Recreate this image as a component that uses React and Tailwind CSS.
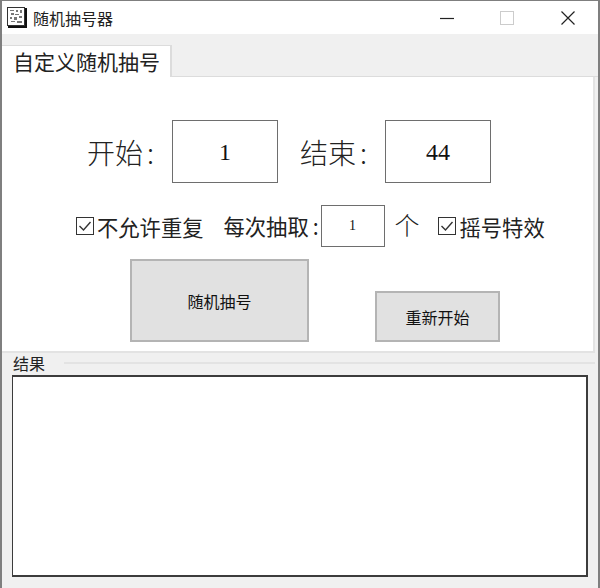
const cjk = "font-['Noto_Sans_CJK_SC',sans-serif]";

const AppIcon = () => (
	<svg width="20" height="21" viewBox="0 0 20 21" className="shrink-0">
		<rect x="0.5" y="0.5" width="17" height="18" fill="#fff" stroke="#333" />
		<path d="M18 1h2v20H1v-2h17z" fill="#111" />
		<path d="M3 3h4v1H3zM9 3h2v2H9zM13 3h2v3h-2zM4 6h3v2H4zM8 7h4v1H8zM3 10h2v2H3zM7 10h3v3H7zM12 9h3v2h-3zM4 14h4v1H4zM10 14h5v2h-5z" fill="#777" />
	</svg>
);

const CheckBox = () => (
	<svg width="18" height="18" viewBox="0 0 18 18" className="shrink-0">
		<rect x="0.5" y="0.5" width="17" height="17" fill="#fff" stroke="#333" />
		<path d="M3.5 9l4 4 7-8" fill="none" stroke="#333" strokeWidth="1.4" />
	</svg>
);

const NumberBox = ({ value, className }) => (
	<div className={`flex items-center justify-center bg-white border border-[#6e6e6e] text-[#111] font-['Liberation_Serif',serif] ${className}`}>
		{value}
	</div>
);

const Button = ({ label, className }) => (
	<button className={`bg-[#e1e1e1] border-2 border-[#b4b4b4] text-[16px] text-[#111] ${className}`}>
		{label}
	</button>
);

export default function App() {
	return (
		<div className={`w-[600px] h-[588px] flex flex-col bg-[#f0f0f0] border-x-2 border-t border-[#7f7f7f] text-[#1a1a1a] ${cjk}`}>
			{/* title bar */}
			<div className="h-[33px] bg-white flex items-center shrink-0">
				<div className="ml-[5px] flex items-center gap-[6px]">
					<AppIcon />
					<span className="text-[16px] leading-none text-[#222]">随机抽号器</span>
				</div>
				<div className="ml-auto flex items-center">
					<svg width="14" height="14" viewBox="0 0 14 14" className="mr-[46px]">
						<path d="M0 7.5h14" stroke="#222" strokeWidth="1.2" />
					</svg>
					<svg width="14" height="14" viewBox="0 0 14 14" className="mr-[47px]">
						<rect x="0.5" y="0.5" width="13" height="13" fill="none" stroke="#ccc" strokeWidth="1" />
					</svg>
					<svg width="14" height="14" viewBox="0 0 14 14" className="mr-[23px]">
						<path d="M0.5 0.5l13 13M13.5 0.5l-13 13" stroke="#222" strokeWidth="1.2" />
					</svg>
				</div>
			</div>

			{/* tab strip */}
			<div className="h-[43px] shrink-0 flex items-end">
				<div className="w-[170px] h-[32px] bg-white border-r-2 border-t border-[#dcdcdc] flex items-center pl-[11px] text-[21px] leading-none text-[#222]">
					自定义随机抽号
				</div>
				<div className="flex-1 h-px bg-[#dcdcdc]" />
			</div>

			{/* tab page */}
			<div className="h-[276px] shrink-0 mr-[3px] bg-white border-b-2 border-r-2 border-[#e3e3e3] flex flex-col">
				<div className="flex items-center mt-[43px] h-[63px] font-light text-[28px] text-[#222]">
					<span className="ml-[85px] w-[85px]">开始<span className="ml-[4px]">:</span></span>
					<NumberBox value="1" className="w-[106px] h-[63px] text-[24px]" />
					<span className="ml-[22px] w-[85px]">结束<span className="ml-[4px]">:</span></span>
					<NumberBox value="44" className="w-[106px] h-[63px] text-[24px]" />
				</div>
				<div className="flex items-center mt-[22px] h-[42px] text-[21.3px] leading-none text-[#222]">
					<div className="ml-[74px] mt-[1px] flex items-center gap-[3px]">
						<CheckBox />
						<span>不允许重复</span>
					</div>
					<span className="ml-[20px] w-[97px]">每次抽取<span className="ml-[4px]">:</span></span>
					<NumberBox value="1" className="w-[64px] h-[42px] text-[14px]" />
					<span className="ml-[10px] text-[25px] font-light -mt-[4px]">个</span>
					<div className="ml-[18px] mt-[1px] flex items-center gap-[4px]">
						<CheckBox />
						<span>摇号特效</span>
					</div>
				</div>
				<div className="flex items-end mt-[12px]">
					<Button label="随机抽号" className="ml-[128px] w-[179px] h-[83px]" />
					<Button label="重新开始" className="ml-[66px] w-[125px] h-[51px]" />
				</div>
			</div>

			{/* result group */}
			<div className="flex-1 flex flex-col px-[10px] min-h-0">
				<div className="h-[22px] shrink-0 flex items-center pb-[3px] text-[16px] leading-none text-[#222]">
					<span className="ml-px">结果</span>
					<div className="flex-1 h-[2px] bg-[#e3e3e3] ml-[19px] -mr-[7px]" />
				</div>
				<div className="h-[202px] shrink-0 bg-white border-2 border-[#3c3c3c] border-l" />
			</div>
		</div>
	);
}
